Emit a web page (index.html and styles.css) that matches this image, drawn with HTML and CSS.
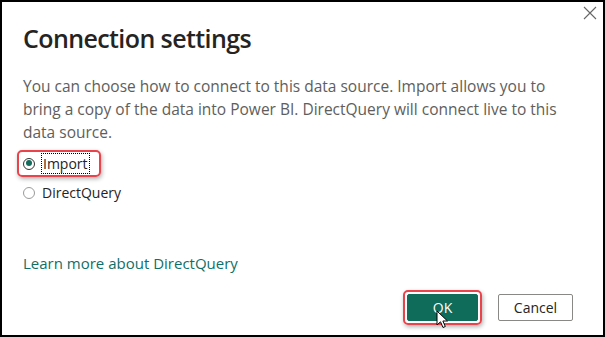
FILE: index.html
```html
<!DOCTYPE html>
<html lang="en">
<head>
    <meta charset="UTF-8">
    <meta name="viewport" content="width=device-width, initial-scale=1.0">
    <title>Connection settings</title>
    <link rel="stylesheet" href="styles.css">
</head>
<body>
    <div class="dialog">
        <!-- Close button -->
        <button class="close" aria-label="Close">
            <svg width="14" height="14" viewBox="0 0 14 14">
                <path d="M1 1 L13 13 M13 1 L1 13" stroke="#666" stroke-width="1.1" fill="none"/>
            </svg>
        </button>

        <h1 class="title">Connection settings</h1>
        <p class="desc">You can choose how to connect to this data source. Import allows you to bring a copy of the data into Power BI. DirectQuery will connect live to this data source.</p>

        <div class="options">
            <label class="option highlight">
                <span class="radio checked"></span>
                <span class="option-text focus">Import</span>
            </label>
            <label class="option">
                <span class="radio"></span>
                <span class="option-text">DirectQuery</span>
            </label>
        </div>

        <a class="learn" href="#">Learn more about DirectQuery</a>

        <div class="footer">
            <div class="ok-wrap">
                <button class="btn btn-primary">OK</button>
                <!-- Mouse pointer -->
                <svg class="cursor" width="14" height="20" viewBox="0 0 14 20">
                    <path d="M1 1 L1 15 L4.5 11.8 L7 17.5 L9.3 16.5 L6.9 11 L11.5 11 Z" fill="#fff" stroke="#000" stroke-width="1" stroke-linejoin="round"/>
                </svg>
            </div>
            <button class="btn btn-secondary">Cancel</button>
        </div>
    </div>
</body>
</html>
```

FILE: styles.css
```css
/* Base */
* {
    box-sizing: border-box;
}

body, html {
    margin: 0;
    padding: 0;
    background: #fff;
    font-family: 'Open Sans', 'Noto Sans', sans-serif;
}

/* Dialog frame */
.dialog {
    position: relative;
    width: 605px;
    height: 337px;
    border: 2px solid #000;
    padding: 0 21px 10px 21px;
    display: flex;
    flex-direction: column;
}

.close {
    position: absolute;
    top: 1px;
    right: 3px;
    width: 20px;
    height: 20px;
    padding: 0;
    border: none;
    background: none;
    display: flex;
    align-items: center;
    justify-content: center;
}

/* Heading and text */
.title {
    margin: 18px 0 0 0;
    font-size: 25px;
    font-weight: 600;
    letter-spacing: -0.6px;
    line-height: 36px;
    color: #252423;
}

.desc {
    margin: 19px 0 0 0;
    max-width: 545px;
    font-size: 15.5px;
    line-height: 23px;
    color: #605e5c;
}

/* Radio options */
.options {
    margin-top: 6px;
    display: flex;
    flex-direction: column;
    gap: 2px;
}

.option {
    display: flex;
    align-items: center;
    gap: 7px;
    height: 27px;
    font-size: 14px;
    color: #252423;
}

.option.highlight {
    align-self: flex-start;
    margin-left: -6px;
    padding: 0 10px 0 4px;
    border: 2px solid #e9434b;
    border-radius: 5px;
    box-shadow: 1px 2px 4px rgba(0, 0, 0, 0.3);
}

.radio {
    width: 12px;
    height: 12px;
    border-radius: 50%;
    border: 1px solid #9a9a9a;
    background: #fff;
    position: relative;
}

.radio.checked {
    border: 1.5px solid #333;
}

.radio.checked::after {
    content: "";
    position: absolute;
    top: 1.5px;
    left: 1.5px;
    width: 6px;
    height: 6px;
    border-radius: 50%;
    background: #146b5b;
}

.option-text.focus {
    outline: 1px dotted #000;
    outline-offset: 0;
    padding: 0 1px;
}

/* Link */
.learn {
    margin-top: auto;
    align-self: flex-start;
    font-size: 15px;
    color: #0f6f66;
    text-decoration: none;
}

/* Footer buttons */
.footer {
    margin-top: 17px;
    display: flex;
    justify-content: flex-end;
    align-items: center;
    gap: 16px;
    padding-right: 9px;
}

.ok-wrap {
    position: relative;
    border: 2px solid #e9434b;
    border-radius: 5px;
    padding: 2px;
    box-shadow: 1px 2px 4px rgba(0, 0, 0, 0.3);
}

.btn {
    font-family: inherit;
    font-size: 14px;
    height: 27px;
    border-radius: 2px;
    cursor: pointer;
    display: block;
}

.btn-primary {
    width: 71px;
    background: #0f6b5a;
    border: 1px solid #0f6b5a;
    color: #fff;
}

.btn-secondary {
    width: 75px;
    background: #fff;
    border: 1px solid #8a8886;
    color: #252423;
}

.cursor {
    position: absolute;
    left: 31px;
    top: 18px;
}
```
